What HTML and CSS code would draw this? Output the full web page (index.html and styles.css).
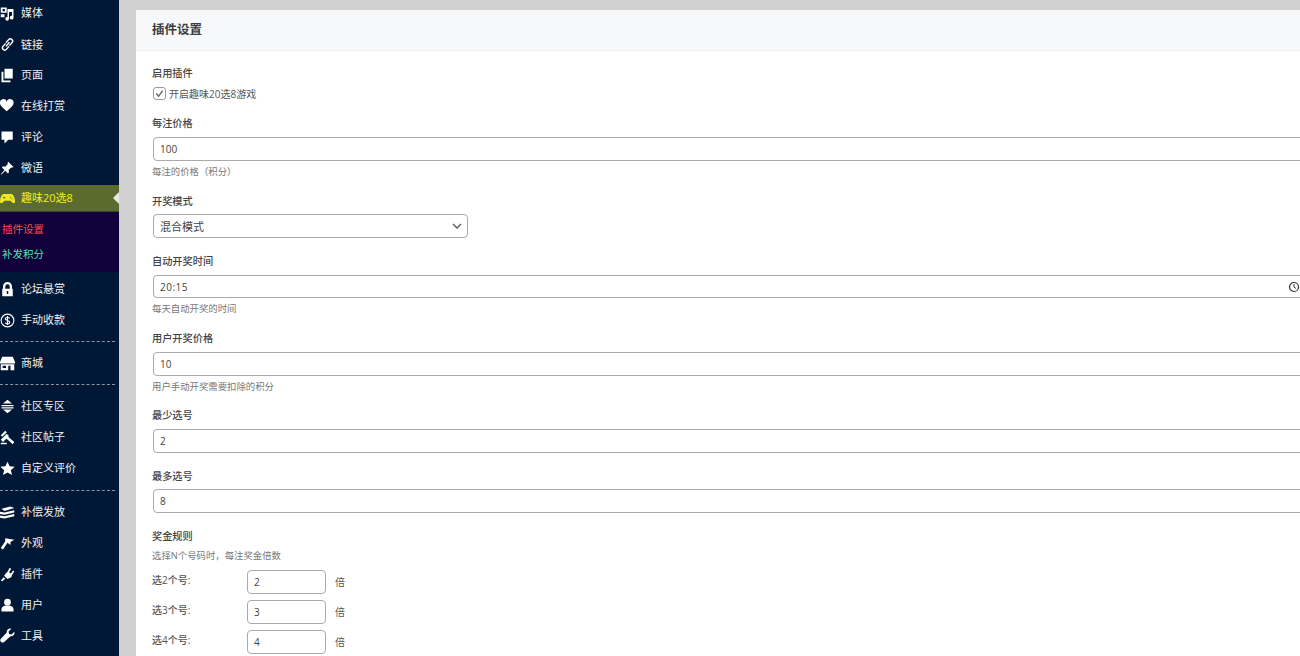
FILE: index.html
```html
<!DOCTYPE html>
<html lang="zh-CN">
<head>
    <meta charset="UTF-8">
    <title>插件设置</title>
    <link rel="stylesheet" href="styles.css">
</head>
<body>
    <aside class="sidebar">
        <ul class="menu">
            <li class="menu-item first"><svg viewBox="0 0 20 20"><path d="M1 2h8v7H1zM3.500 4v3H6.500V4z" fill-rule="evenodd"/><path d="M10 4h8v11.500a2.500 2.500 0 1 1-2-2.400V8h-4v9a2.500 2.500 0 1 1-2-2.400z"/><path d="M1 11h5v4H1z"/></svg>媒体</li>
            <li class="menu-item"><svg viewBox="0 0 20 20"><path d="M8 12.500l4.500-5.500M7.500 8.500l-3.500 4a3 3 0 0 0 4.500 4l3.500-4M12.500 11.500l3.500-4a3 3 0 0 0-4.500-4l-3.500 4" fill="none" stroke="#fff" stroke-width="2"/></svg>链接</li>
            <li class="menu-item"><svg viewBox="0 0 20 20"><path d="M6 1h11v13H6z"/><path d="M2 5h2.500v11.500H14V19H2z"/></svg>页面</li>
            <li class="menu-item"><svg viewBox="0 0 20 20"><path d="M10 18C4 13 0 10 0 6a4.800 4.800 0 0 1 10-1.500A4.800 4.800 0 0 1 20 6c0 4-4 7-10 12z" transform="translate(0 0) scale(.9)"/></svg>在线打赏</li>
            <li class="menu-item"><svg viewBox="0 0 20 20"><path d="M2 2h15v11h-6l-5 5v-5H2z"/></svg>评论</li>
            <li class="menu-item"><svg viewBox="0 0 20 20"><path d="M11 1l7 7-2 1-1-.5-3.500 3.500.5 3-1.500 1.500L7 13l-5 5-1-.5L6 12 2.500 8.500 4 7l3 .5L10.500 4 10 3z"/></svg>微语</li>
            <li class="menu-item active"><svg viewBox="0 0 20 20"><path d="M5 4h10c3 0 5 6 5 10 0 3-3 3-5 0l-1-1H6l-1 1c-2 3-5 3-5 0C0 10 2 4 5 4z"/><path d="M4 8h3v1.500H4zM13 7.500h1.500V9H13zM15 9.500h1.500V11H15z" fill="#5b6b30"/></svg>趣味20选8</li>
        </ul>
        <ul class="submenu">
            <li class="sub-red">插件设置</li>
            <li class="sub-green">补发积分</li>
        </ul>
        <ul class="menu">
            <li class="menu-item"><svg viewBox="0 0 20 20"><path d="M3 9h1V6a6 6 0 0 1 12 0v3h1v10H3zM7 9h6V6a3 3 0 0 0-6 0zM9 12v4h2v-4z" fill-rule="evenodd"/></svg>论坛悬赏</li>
            <li class="menu-item"><svg viewBox="0 0 20 20"><circle cx="10" cy="10" r="8.500" fill="none" stroke="#fff" stroke-width="1.500"/><path d="M13 7c-1-1.500-6-1.500-6 .8S13 10 13 12.500 8 15 7 13M10 4v12" fill="none" stroke="#fff" stroke-width="1.500"/></svg>手动收款</li>
            <li class="separator"></li>
            <li class="menu-item tight"><svg viewBox="0 0 20 20"><path d="M3 1h14l3 7v2H0V8z"/><path d="M1 11h18v8h-5v-6h-3v6H1zM3.500 13v3H8v-3z" fill-rule="evenodd"/></svg>商城</li>
            <li class="separator"></li>
            <li class="menu-item tight"><svg viewBox="0 0 20 20"><path d="M10 1l6 5H4zM2 8h16v1.500H2zM2 11h16v1.500H2zM4 14h12l-6 5z"/></svg>社区专区</li>
            <li class="menu-item"><svg viewBox="0 0 20 20"><path d="M1 7l6-6 2 2-6 6zM1 13l8-8 3 3-8 8zM8 11l3-2 8 7-2 3zM1 17h8v2H1z"/></svg>社区帖子</li>
            <li class="menu-item"><svg viewBox="0 0 20 20"><path d="M10 1l2.800 6 6.700.7-5 4.500 1.500 6.600L10 15.400 4 18.800l1.500-6.600-5-4.500L7.200 7z"/></svg>自定义评价</li>
            <li class="separator wide"></li>
            <li class="menu-item tight"><svg viewBox="0 0 20 20"><path d="M2 5l12-3 5 2-13 4zM0 9l6 1 13-3v3L6 13l-6-1zM0 14l6 1 13-3v3L6 18l-6-1z"/></svg>补偿发放</li>
            <li class="menu-item"><svg viewBox="0 0 20 20"><path d="M7 3l12 2-5 3v4l-4-3-6 9-3-2 6-9z"/></svg>外观</li>
            <li class="menu-item"><svg viewBox="0 0 20 20"><path d="M13 1l2 1.500-3 4 2.500 2 3-4L19 6l-3 4.500-1 3-3 1.500-2 1-4.500-4.500 2-3 2-1.500zM5 13.500l2 2L3 19l-2-1z"/></svg>插件</li>
            <li class="menu-item"><svg viewBox="0 0 20 20"><circle cx="10" cy="5.500" r="4.500"/><path d="M2 18v-3c0-3 3-5 8-5s8 2 8 5v3z"/></svg>用户</li>
            <li class="menu-item"><svg viewBox="0 0 20 20"><path d="M19 5l-3.500 3.500L12 8l-.5-3.500L15 1c-3-1-6.500 1-6 5L1.500 14a3 3 0 0 0 4 4.500L14 11c4 .5 6-3 5-6z"/></svg>工具</li>
        </ul>
    </aside>

    <main class="content">
        <section class="card">
            <h2 class="card-title">插件设置</h2>
            <div class="card-body">
                <div class="form-group">
                    <div class="label">启用插件</div>
                    <label class="check-row">
                        <span class="check-box"><svg viewBox="0 0 12 12"><path d="M2.500 6l2.500 3 4.500-6" fill="none" stroke="#666" stroke-width="1.500"/></svg></span>
                        开启趣味20选8游戏
                    </label>
                </div>
                <div class="form-group">
                    <div class="label">每注价格</div>
                    <input class="input" type="text" value="100">
                    <p class="hint">每注的价格（积分）</p>
                </div>
                <div class="form-group">
                    <div class="label">开奖模式</div>
                    <div class="select-wrap">
                        <select class="input select"><option>混合模式</option></select>
                        <svg class="chevron" viewBox="0 0 12 12"><path d="M2 4l4 4 4-4" fill="none" stroke="#555" stroke-width="1.300"/></svg>
                    </div>
                </div>
                <div class="form-group">
                    <div class="label">自动开奖时间</div>
                    <div class="time-wrap">
                        <input class="input" type="text" value="20:15">
                        <svg class="clock" viewBox="0 0 12 12"><circle cx="6" cy="6" r="4.500" fill="none" stroke="#333" stroke-width="1.200"/><path d="M6 3v3l2 1.500" fill="none" stroke="#333"/></svg>
                    </div>
                    <p class="hint">每天自动开奖的时间</p>
                </div>
                <div class="form-group">
                    <div class="label">用户开奖价格</div>
                    <input class="input" type="text" value="10">
                    <p class="hint">用户手动开奖需要扣除的积分</p>
                </div>
                <div class="form-group">
                    <div class="label">最少选号</div>
                    <input class="input" type="text" value="2">
                </div>
                <div class="form-group">
                    <div class="label">最多选号</div>
                    <input class="input" type="text" value="8">
                </div>
                <div class="form-group">
                    <div class="label">奖金规则</div>
                    <p class="hint rule-hint">选择N个号码时，每注奖金倍数</p>
                    <div class="rule-row">
                        <span class="rule-name">选2个号:</span>
                        <input class="input small" type="text" value="2">
                        <span class="rule-unit">倍</span>
                    </div>
                    <div class="rule-row">
                        <span class="rule-name">选3个号:</span>
                        <input class="input small" type="text" value="3">
                        <span class="rule-unit">倍</span>
                    </div>
                    <div class="rule-row">
                        <span class="rule-name">选4个号:</span>
                        <input class="input small" type="text" value="4">
                        <span class="rule-unit">倍</span>
                    </div>
                </div>
            </div>
        </section>
    </main>
</body>
</html>
```

FILE: styles.css
```css
/* General Styles */
html, body {
    height: 656px;
    overflow: hidden;
}
body {
    margin: 0;
    display: flex;
    font-family: "Open Sans", "Noto Sans CJK SC", sans-serif;
    background: #d1d1d1;
    color: #444;
}
ul {
    list-style: none;
    margin: 0;
    padding: 0;
}

/* Sidebar */
.sidebar {
    flex: 0 0 119px;
    height: 656px;
    overflow: hidden;
    background: #001735;
    color: #f0f0f0;
    font-size: 11px;
}
.menu-item {
    display: flex;
    align-items: center;
    gap: 6px;
    height: 30.8px;
    line-height: 30.8px;
    position: relative;
}
.menu-item svg {
    flex: 0 0 15px;
    width: 15px;
    height: 15px;
    fill: #fff;
}
.menu-item.first {
    margin-top: -3px;
    height: 32.5px;
}
.menu-item.tight {
    margin-top: 6px;
}
.menu-item.active {
    height: 26px;
    margin-top: 2px;
    background: #5b6b30;
    color: #f0f01e;
    border-bottom: 1px solid #3f4a2a;
}
.menu-item.active svg {
    fill: #f0e81e;
}
.menu-item.active::after {
    content: "";
    position: absolute;
    right: 0;
    top: 7px;
    border: 6px solid transparent;
    border-left: 0;
    border-right-color: #e8e8e8;
}
.separator {
    height: 0;
    margin: 5.5px 4px 0 0;
    border-top: 1px dashed #8a93a3;
}
.separator.wide {
    margin-top: 6.5px;
}
.submenu {
    height: 59.6px;
    padding-top: 4.5px;
    box-sizing: border-box;
    margin-bottom: 2px;
    background: #12003a;
    font-size: 10.5px;
}
.submenu li {
    height: 25px;
    line-height: 25px;
    padding-left: 2px;
}
.sub-red {
    color: #ff4a4a;
}
.sub-green {
    color: #4fe3b0;
}

/* Settings Card */
.content {
    flex: 1;
    min-width: 0;
    padding: 10px 0 0 17px;
}
.card {
    width: 1200px;
    background: #fff;
    border-radius: 6px 0 0 0;
}
.card-title {
    margin: 0;
    padding: 0 16px;
    height: 40px;
    line-height: 40px;
    font-size: 12.5px;
    font-weight: 600;
    color: #3c3c3c;
    background: #f7f8fa;
    border-bottom: 1px solid #eeeeee;
}
.card-body {
    padding: 15px 16px 0;
}
.form-group {
    margin-bottom: 15.8px;
}
.label {
    height: 14px;
    line-height: 14px;
    font-size: 10.2px;
    font-weight: 500;
    color: #444;
    margin-bottom: 6.7px;
}
.check-row {
    display: flex;
    align-items: center;
    gap: 3px;
    height: 14px;
    font-size: 10px;
    color: #555;
}
.check-box {
    width: 11px;
    height: 11px;
    margin-left: 1px;
    border: 1px solid #999;
    border-radius: 3px;
    display: flex;
}
.input {
    display: block;
    box-sizing: border-box;
    width: 100%;
    height: 23.75px;
    padding: 0 6px;
    font-family: inherit;
    font-size: 10px;
    color: #444;
    background: #fff;
    border: 1px solid #aaa;
    border-radius: 4px;
    outline: none;
    margin-left: 1px;
}
.hint {
    margin: 5px 0 1px;
    height: 12px;
    line-height: 12px;
    font-size: 9.4px;
    color: #777;
}
.select-wrap {
    position: relative;
    width: 315px;
}
.select {
    appearance: none;
    font-size: 11px;
}
.chevron {
    position: absolute;
    right: 4px;
    top: 6px;
    width: 12px;
    height: 12px;
}
.time-wrap {
    position: relative;
}
.time-wrap .input {
    letter-spacing: 0.5px;
}
.clock {
    position: absolute;
    left: 1136px;
    top: 6px;
    width: 12px;
    height: 12px;
}
.rule-hint {
    margin: 0 0 8px;
}
.rule-row {
    display: flex;
    align-items: flex-start;
    height: 30px;
    font-size: 10px;
}
.rule-name {
    flex: 0 0 95px;
    line-height: 20px;
    font-weight: 500;
    color: #555;
}
.input.small {
    flex: 0 0 79px;
    width: 79px;
    height: 24px;
    margin: 0;
}
.rule-unit {
    margin-left: 9px;
    line-height: 24px;
    color: #555;
}
```
